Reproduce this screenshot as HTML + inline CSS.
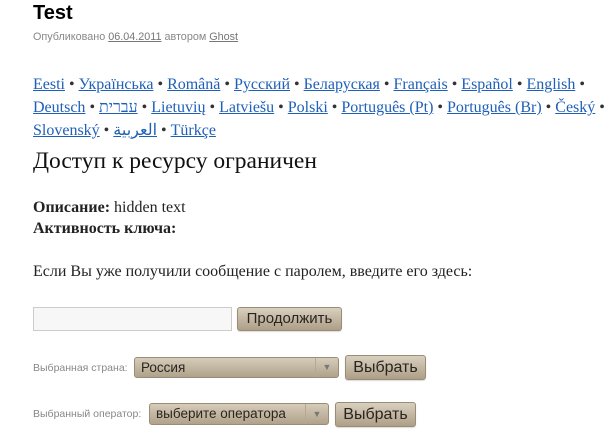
<!DOCTYPE html>
<html><head><meta charset="utf-8"><style>
body{margin:0;background:#fff;width:615px;height:445px;overflow:hidden;position:relative;font-family:"Liberation Serif",serif;color:#222}
.a{position:absolute;white-space:nowrap}
.t{left:33px;top:2px;font:bold 20px "Liberation Sans",sans-serif;color:#000}
.m{left:33px;top:31px;font:10.8px "Liberation Sans",sans-serif;color:#888}
.m u{color:#777}
.l{left:33px;top:73px;font-size:16px;line-height:23px;color:#333}
.l a{color:#1e5fb8;text-decoration:underline}
.h{left:33px;top:148px;font-size:23.5px;color:#111}
.p{font-size:16px;color:#222}
.btn{position:absolute;border:1px solid #9a8d78;border-radius:3px;background:linear-gradient(#d9cfbe,#ad9f87);font:15px "Liberation Sans",sans-serif;color:#2a2520;text-align:center;box-shadow:0 1px 1px rgba(0,0,0,.15)}
.sel{position:absolute;border:1px solid #9a8d78;border-radius:3px;background:linear-gradient(#d6ccba,#b0a28a);font:13.5px "Liberation Sans",sans-serif;color:#2a2520;box-sizing:border-box;padding-left:6px}
.sel i{position:absolute;right:0;top:0;bottom:0;width:22px;border-left:1px solid #b5a994;font-style:normal;font-size:9px;color:#777;text-align:center}
.lab{position:absolute;font:10.5px "Liberation Sans",sans-serif;color:#888}
</style></head><body>
<div class="a t">Test</div>
<div class="a m">Опубликовано <u>06.04.2011</u> автором <u>Ghost</u></div>
<div class="a l"><a>Eesti</a> • <a>Українська</a> • <a>Română</a> • <a>Русский</a> • <a>Беларуская</a> • <a>Français</a> • <a>Español</a> • <a>English</a> •<br><a>Deutsch</a> • <a>עברית</a> • <a>Lietuvių</a> • <a>Latviešu</a> • <a>Polski</a> • <a>Português (Pt)</a> • <a>Português (Br)</a> • <a>Český</a> •<br><a>Slovenský</a> • <a>العربية</a> • <a>Türkçe</a></div>
<div class="a h">Доступ к ресурсу ограничен</div>
<div class="a p" style="left:33px;top:199px"><b>Описание:</b> hidden text</div>
<div class="a p" style="left:33px;top:220px"><b>Активность ключа:</b></div>
<div class="a p" style="left:33px;top:263px">Если Вы уже получили сообщение с паролем, введите его здесь:</div>
<div style="position:absolute;left:33px;top:307px;width:197px;height:22px;border:1px solid #ccc;background:#f7f7f7"></div>
<div class="btn" style="left:237px;top:307px;width:103px;height:22px;line-height:22px">Продолжить</div>
<div class="lab" style="left:33px;top:362px">Выбранная страна:</div>
<div class="sel" style="left:134px;top:357px;width:205px;height:21px;line-height:19px">Россия<i>▼</i></div>
<div class="btn" style="left:345px;top:355px;width:79px;height:23px;line-height:23px;font-size:16px">Выбрать</div>
<div class="lab" style="left:33px;top:408px">Выбранный оператор:</div>
<div class="sel" style="left:149px;top:403px;width:180px;height:22px;line-height:20px">выберите оператора<i>▼</i></div>
<div class="btn" style="left:335px;top:402px;width:79px;height:23px;line-height:23px;font-size:16px">Выбрать</div>
</body></html>
